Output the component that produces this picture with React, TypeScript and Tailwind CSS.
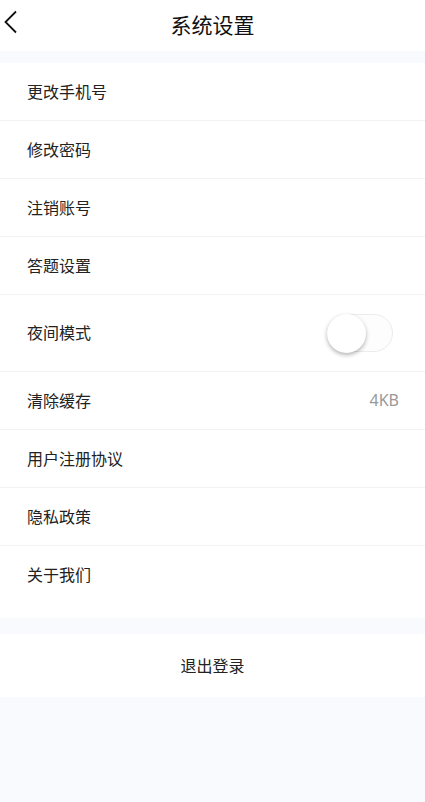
import React from 'react';

const items = ['更改手机号', '修改密码', '注销账号', '答题设置'];
const items2 = ['用户注册协议', '隐私政策', '关于我们'];

const Row: React.FC<{ label: string; last?: boolean; children?: React.ReactNode; tall?: boolean }> = ({
  label,
  last,
  children,
  tall,
}) => (
  <div
    className={`flex items-center justify-between pl-[27px] pr-[26px] ${tall ? 'h-[77px]' : 'h-[58px]'} ${
      last ? '' : 'border-b border-[#f2f2f2]'
    }`}
  >
    <span className="-mt-[2px] text-[16px] text-[#222]">{label}</span>
    {children}
  </div>
);

const App: React.FC = () => {
  return (
    <div
      className="min-h-screen bg-[#f9fafd]"
      style={{ fontFamily: '"Noto Sans CJK SC", "Noto Sans", sans-serif' }}
    >
      <header className="relative flex h-[51px] items-center justify-center bg-white">
        <button className="absolute left-[3px] top-[10px] p-0">
          <svg width="16" height="24" viewBox="0 0 16 24" fill="none">
            <path d="M13 1.5 L2.5 12 L13 22.5" stroke="#111" strokeWidth="1.8" />
          </svg>
        </button>
        <h1 className="-mt-[2px] text-[21px] text-[#111]">系统设置</h1>
      </header>

      <div className="h-[12px]" />

      <div className="bg-white pb-[14px]">
        {items.map((t) => (
          <Row key={t} label={t} />
        ))}
        <Row label="夜间模式" tall>
          <div className="relative mr-[6px] h-[38px] w-[66px] rounded-full border border-[#ececec] bg-[#fdfdfd]">
            <div className="absolute -left-[1px] -top-[1px] h-[39px] w-[39px] rounded-full bg-white shadow-[0_2px_4px_rgba(0,0,0,0.3)]" />
          </div>
        </Row>
        <Row label="清除缓存">
          <span className="-mt-[2px] text-[16px] text-[#999]" style={{ fontFamily: '"Noto Sans", sans-serif' }}>
            4KB
          </span>
        </Row>
        {items2.map((t, i) => (
          <Row key={t} label={t} last={i === items2.length - 1} />
        ))}
      </div>

      <div className="h-[16px]" />

      <div className="flex h-[63px] items-center justify-center bg-white">
        <span className="-mt-[2px] text-[16px] text-[#222]">退出登录</span>
      </div>
    </div>
  );
};

export default App;
